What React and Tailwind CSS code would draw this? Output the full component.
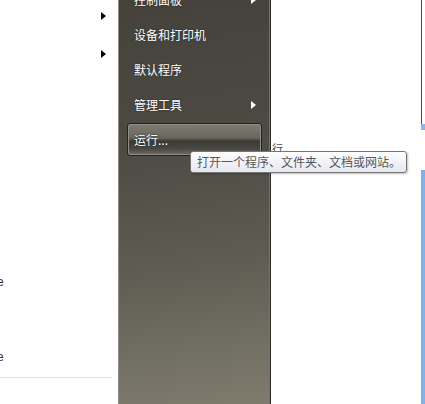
import React from "react";

const font = { fontFamily: '"Noto Sans CJK SC", "Liberation Sans", sans-serif' };

const Arrow = ({ white }) => (
  <span
    className={
      white
        ? "block w-0 h-0 border-y-[4px] border-y-transparent border-l-[5px] border-l-white"
        : "block w-0 h-0 border-y-[4px] border-y-transparent border-l-[5px] border-l-black"
    }
  />
);

const MenuItem = ({ label, arrow }) => (
  <div className="h-[35px] flex items-center justify-between pl-[15px] pr-[14px]">
    <span className="text-white text-[12px] leading-none [text-shadow:0_0_2px_rgba(0,0,0,0.5)]">
      {label}
    </span>
    {arrow && <Arrow white />}
  </div>
);

const App = () => {
  return (
    <div
      className="relative flex w-[425px] h-[404px] bg-white overflow-hidden"
      style={font}
    >
      {/* left programs column */}
      <div className="w-[118px] flex flex-col">
        <div className="-mt-[3px] h-[38px] flex items-center justify-end pr-[12px]">
          <Arrow />
        </div>
        <div className="h-[38px] flex items-center justify-end pr-[12px]">
          <Arrow />
        </div>
        <div className="mt-[199px] h-[20px] flex items-center overflow-hidden">
          <span className="-ml-[3px] text-[12px] text-[#333] leading-none" style={{ fontFamily: '"Liberation Sans", sans-serif' }}>e</span>
        </div>
        <div className="mt-[55px] h-[20px] flex items-center overflow-hidden">
          <span className="-ml-[3px] text-[12px] text-[#333] leading-none" style={{ fontFamily: '"Liberation Sans", sans-serif' }}>e</span>
        </div>
        <div className="mt-[10px] h-px w-[112px] bg-[#d5e1ec]" />
      </div>

      {/* dark right pane */}
      <div className="w-[153px] h-full flex flex-col border-l border-[#8e8c85] border-r border-r-[#2c2b27] shadow-[inset_-1px_0_0_#75736a] bg-[linear-gradient(172deg,#45423b_0%,#4c4a43_35%,#5f5c53_65%,#7f7c6e_100%)]">
        <div className="-mt-[18px]">
          <MenuItem label="控制面板" arrow />
          <MenuItem label="设备和打印机" />
          <MenuItem label="默认程序" />
          <MenuItem label="管理工具" arrow />
        </div>
        <div className="mt-[1px] ml-[8px] w-[135px] h-[33px] rounded-[3px] border border-[#24231f] shadow-[inset_0_0_0_1px_#8f8d85] bg-[linear-gradient(180deg,#7e7c73_0%,#67655d_45%,#3c3a34_55%,#4a4842_80%,#6e6c64_100%)] flex items-center pl-[6px]">
          <span className="text-white text-[12px] leading-none [text-shadow:0_0_2px_rgba(0,0,0,0.6)]">
            运行...
          </span>
        </div>
      </div>

      {/* white area */}
      <div className="flex-1 relative">
        <span className="absolute left-[1px] top-[143px] text-[11px] leading-none text-[#444]">行</span>
      </div>

      {/* right edge strip */}
      <div className="w-[4px] flex flex-col">
        <div className="h-[124px] w-[1px] bg-[#4a4a4a]" />
        <div className="h-[6px] bg-[#8cb6e6]" />
        <div className="h-[40px]" />
        <div className="flex-1 bg-[#7eb0ea]" />
      </div>

      {/* tooltip */}
      <div className="absolute left-[190px] top-[151px] w-[217px] h-[22px] rounded-[3px] border border-[#767676] bg-[linear-gradient(180deg,#ffffff_0%,#e6e7ef_100%)] shadow-[1px_1px_2px_rgba(0,0,0,0.25)] flex items-center pl-[6px]">
        <span className="text-[12px] leading-none text-[#575757]">
          打开一个程序、文件夹、文档或网站。
        </span>
      </div>
    </div>
  );
};

export default App;
